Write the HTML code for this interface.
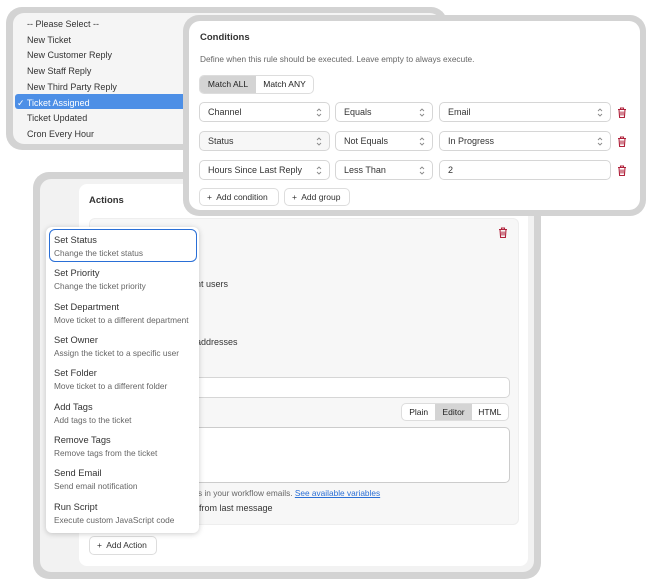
<!DOCTYPE html>
<html><head><meta charset="utf-8"><style>
*{box-sizing:border-box;margin:0;padding:0}
body{width:651px;height:585px;background:#fff;font-family:"Liberation Sans",sans-serif;color:#222;position:relative;overflow:hidden;font-size:9px}
.abs{position:absolute}
.frame{position:absolute;background:#d3d3d3;border-radius:16px}
.inner{position:absolute;border-radius:11px}
.sel{position:absolute;height:20px;border:1px solid #d6d6d6;border-radius:5px;background:#fff;padding-left:8px;line-height:18px;font-size:9px;color:#333}
.sel svg{position:absolute;right:7px;top:5px;width:6px;height:9px}
.trash{position:absolute;width:10px;height:11px}
.btn{position:absolute;height:18px;border:1px solid #ddd;border-radius:5px;background:#fff;font-size:8.5px;line-height:16px;padding-left:7px;color:#333}
.it{position:absolute;left:54px;font-size:9.3px;color:#333}
.it small{display:block;font-size:8.3px;color:#666;margin-top:3px}
</style></head><body>

<div class="frame" style="left:6px;top:7px;width:441px;height:143px"></div>
<div class="inner" style="left:13px;top:13px;width:428px;height:131px;background:#f5f5f5"></div>
<div class="abs" style="left:15px;top:94px;width:180px;height:15px;background:#4d8fe6;border-radius:3px"></div>
<div class="abs" style="left:27px;top:17px;font-size:9px;line-height:15.7px;color:#333">
-- Please Select --<br>New Ticket<br>New Customer Reply<br>New Staff Reply<br>New Third Party Reply<br><span style="color:#fff;margin-left:-10px">✓ Ticket Assigned</span><br>Ticket Updated<br>Cron Every Hour</div>

<div class="frame" style="left:33px;top:172px;width:508px;height:407px"></div>
<div class="inner" style="left:40px;top:179px;width:494px;height:393px;background:#f2f2f2"></div>
<div class="abs" style="left:79px;top:184px;width:449px;height:382px;background:#fff;border-radius:8px"></div>
<div class="abs" style="left:89px;top:195px;font-size:9.5px;font-weight:bold;color:#333">Actions</div>
<div class="abs" style="left:89px;top:218px;width:430px;height:307px;background:#f7f7f7;border:1px solid #eee;border-radius:6px"></div>
<svg class="trash" style="left:498px;top:227px" viewBox="0 0 10 11"><path d="M1 2.5h8M3.5 2.5V1h3v1.5M2 2.5l.6 8h4.8l.6-8M4 4.5v4M6 4.5v4" fill="none" stroke="#b0203a" stroke-width="1.1"/></svg>
<div class="abs" style="left:196px;top:279px;font-size:9px;color:#333">nt users</div>
<div class="abs" style="left:196px;top:337px;font-size:9px;color:#333">addresses</div>
<div class="abs" style="left:190px;top:377px;width:320px;height:21px;background:#fff;border:1px solid #d6d6d6;border-radius:5px"></div>
<div class="abs" style="left:401px;top:403px;width:108px;height:18px;background:#fff;border:1px solid #ddd;border-radius:5px;font-size:8.5px;line-height:16px;display:flex;overflow:hidden">
<span style="width:34px;text-align:center">Plain</span><span style="width:37px;text-align:center;background:#d4d4d4">Editor</span><span style="width:37px;text-align:center">HTML</span></div>
<div class="abs" style="left:190px;top:427px;width:320px;height:56px;background:#fff;border:1px solid #ccc;border-radius:5px"></div>
<div class="abs" style="left:198px;top:488px;font-size:8.3px;color:#666">s in your workflow emails. <span style="color:#2a6fd6;text-decoration:underline">See available variables</span></div>
<div class="abs" style="left:199px;top:503px;font-size:9px;color:#333">from last message</div>
<div class="btn" style="left:89px;top:536px;width:68px;height:19px;line-height:17px;font-size:8.5px">+&nbsp; Add Action</div>

<div class="abs" style="left:46px;top:227px;width:153px;height:306px;background:#fff;border-radius:6px;box-shadow:0 1px 6px rgba(0,0,0,.2)"></div>
<div class="abs" style="left:49px;top:229px;width:148px;height:33px;border:1.5px solid #2a6fd6;border-radius:6px"></div>
<div class="it" style="top:235px">Set Status<small>Change the ticket status</small></div>
<div class="it" style="top:268px">Set Priority<small>Change the ticket priority</small></div>
<div class="it" style="top:302px">Set Department<small>Move ticket to a different department</small></div>
<div class="it" style="top:335px">Set Owner<small>Assign the ticket to a specific user</small></div>
<div class="it" style="top:368px">Set Folder<small>Move ticket to a different folder</small></div>
<div class="it" style="top:402px">Add Tags<small>Add tags to the ticket</small></div>
<div class="it" style="top:435px">Remove Tags<small>Remove tags from the ticket</small></div>
<div class="it" style="top:468px">Send Email<small>Send email notification</small></div>
<div class="it" style="top:502px">Run Script<small>Execute custom JavaScript code</small></div>

<div class="frame" style="left:183px;top:15px;width:463px;height:201px"></div>
<div class="inner" style="left:189px;top:21px;width:451px;height:189px;background:#fff"></div>
<div class="abs" style="left:200px;top:32px;font-size:9.5px;font-weight:bold;color:#333">Conditions</div>
<div class="abs" style="left:200px;top:54px;font-size:8.3px;color:#666">Define when this rule should be executed. Leave empty to always execute.</div>
<div class="abs" style="left:199px;top:75px;width:115px;height:19px;border:1px solid #ddd;border-radius:5px;font-size:8.5px;line-height:17px;display:flex;overflow:hidden">
<span style="width:57px;text-align:center;background:#d4d4d4">Match ALL</span><span style="width:58px;text-align:center">Match ANY</span></div>

<div class="sel" style="left:199px;top:102px;width:131px">Channel<svg viewBox="0 0 6 9"><path d="M1 3l2-2 2 2M1 6l2 2 2-2" fill="none" stroke="#888" stroke-width=".9"/></svg></div>
<div class="sel" style="left:335px;top:102px;width:98px">Equals<svg viewBox="0 0 6 9"><path d="M1 3l2-2 2 2M1 6l2 2 2-2" fill="none" stroke="#888" stroke-width=".9"/></svg></div>
<div class="sel" style="left:439px;top:102px;width:172px">Email<svg viewBox="0 0 6 9"><path d="M1 3l2-2 2 2M1 6l2 2 2-2" fill="none" stroke="#888" stroke-width=".9"/></svg></div>
<div class="sel" style="left:199px;top:131px;width:131px;background:#f7f7f7">Status<svg viewBox="0 0 6 9"><path d="M1 3l2-2 2 2M1 6l2 2 2-2" fill="none" stroke="#888" stroke-width=".9"/></svg></div>
<div class="sel" style="left:335px;top:131px;width:98px">Not Equals<svg viewBox="0 0 6 9"><path d="M1 3l2-2 2 2M1 6l2 2 2-2" fill="none" stroke="#888" stroke-width=".9"/></svg></div>
<div class="sel" style="left:439px;top:131px;width:172px">In Progress<svg viewBox="0 0 6 9"><path d="M1 3l2-2 2 2M1 6l2 2 2-2" fill="none" stroke="#888" stroke-width=".9"/></svg></div>
<div class="sel" style="left:199px;top:160px;width:131px">Hours Since Last Reply<svg viewBox="0 0 6 9"><path d="M1 3l2-2 2 2M1 6l2 2 2-2" fill="none" stroke="#888" stroke-width=".9"/></svg></div>
<div class="sel" style="left:335px;top:160px;width:98px">Less Than<svg viewBox="0 0 6 9"><path d="M1 3l2-2 2 2M1 6l2 2 2-2" fill="none" stroke="#888" stroke-width=".9"/></svg></div>
<div class="sel" style="left:439px;top:160px;width:172px">2</div>
<svg class="trash" style="left:617px;top:107px" viewBox="0 0 10 11"><path d="M1 2.5h8M3.5 2.5V1h3v1.5M2 2.5l.6 8h4.8l.6-8M4 4.5v4M6 4.5v4" fill="none" stroke="#b0203a" stroke-width="1.1"/></svg>
<svg class="trash" style="left:617px;top:136px" viewBox="0 0 10 11"><path d="M1 2.5h8M3.5 2.5V1h3v1.5M2 2.5l.6 8h4.8l.6-8M4 4.5v4M6 4.5v4" fill="none" stroke="#b0203a" stroke-width="1.1"/></svg>
<svg class="trash" style="left:617px;top:165px" viewBox="0 0 10 11"><path d="M1 2.5h8M3.5 2.5V1h3v1.5M2 2.5l.6 8h4.8l.6-8M4 4.5v4M6 4.5v4" fill="none" stroke="#b0203a" stroke-width="1.1"/></svg>
<div class="btn" style="left:199px;top:188px;width:80px">+&nbsp; Add condition</div>
<div class="btn" style="left:284px;top:188px;width:66px">+&nbsp; Add group</div>
</body></html>
